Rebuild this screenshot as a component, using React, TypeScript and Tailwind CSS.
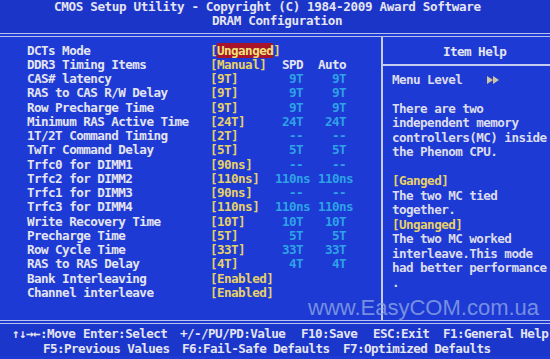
type Row = { label: string; value: string; spd?: string; auto?: string };

const rows: Row[] = [
  { label: "DCTs Mode", value: "Unganged" },
  { label: "DDR3 Timing Items", value: "Manual", spd: " SPD", auto: "Auto" },
  { label: "CAS# latency", value: "9T", spd: "  9T", auto: "  9T" },
  { label: "RAS to CAS R/W Delay", value: "9T", spd: "  9T", auto: "  9T" },
  { label: "Row Precharge Time", value: "9T", spd: "  9T", auto: "  9T" },
  { label: "Minimum RAS Active Time", value: "24T", spd: " 24T", auto: " 24T" },
  { label: "1T/2T Command Timing", value: "2T", spd: "  --", auto: "  --" },
  { label: "TwTr Command Delay", value: "5T", spd: "  5T", auto: "  5T" },
  { label: "Trfc0 for DIMM1", value: "90ns", spd: "  --", auto: "  --" },
  { label: "Trfc2 for DIMM2", value: "110ns", spd: "110ns", auto: "110ns" },
  { label: "Trfc1 for DIMM3", value: "90ns", spd: "  --", auto: "  --" },
  { label: "Trfc3 for DIMM4", value: "110ns", spd: "110ns", auto: "110ns" },
  { label: "Write Recovery Time", value: "10T", spd: " 10T", auto: " 10T" },
  { label: "Precharge Time", value: "5T", spd: "  5T", auto: "  5T" },
  { label: "Row Cycle Time", value: "33T", spd: " 33T", auto: " 33T" },
  { label: "RAS to RAS Delay", value: "4T", spd: "  4T", auto: "  4T" },
  { label: "Bank Interleaving", value: "Enabled" },
  { label: "Channel interleave", value: "Enabled" },
];

// help panel lines, y = yellow heading
const help: { t: string; y?: boolean }[] = [
  { t: "" },
  { t: "There are two" },
  { t: "independent memory" },
  { t: "controllers(MC) inside" },
  { t: "the Phenom CPU." },
  { t: "" },
  { t: "[Ganged]", y: true },
  { t: "The two MC tied" },
  { t: "together." },
  { t: "[Unganged]", y: true },
  { t: "The two MC worked" },
  { t: "interleave.This mode" },
  { t: "had better performance" },
  { t: "." },
];

export default function App() {
  return (
    <div
      className="relative w-[550px] h-[359px] overflow-hidden bg-[#1d3bd4] text-[#e4e4f2] font-bold text-[12.6px] tracking-[-0.56px] whitespace-pre"
      style={{ fontFamily: '"DejaVu Sans Mono", "Liberation Mono", monospace' }}
    >
      {/* title */}
      <div className="h-[33px] bg-[#1b35c8]">
        <div className="h-[14px] leading-[14px] pl-[54px] tracking-[-0.35px]">
          CMOS Setup Utility - Copyright (C) 1984-2009 Award Software
        </div>
        <div className="h-[14px] leading-[14px] pl-[212px] tracking-[-0.35px]">DRAM Configuration</div>
      </div>
      <div className="h-[4px] border-y border-[#b8c2ee]" />

      {/* main */}
      <div className="flex h-[283px]">
        <div className="w-[381px] pt-[6.6px]">
          {rows.map((r, i) => (
            <div key={i} className="flex h-[14.25px] leading-[14.25px]">
              <span className="w-[210px] pl-[27px]">{r.label}</span>
              <span className="w-[65px] text-[#e6d068]">
                [
                {i === 0 ? (
                  <span className="bg-[#a8142a] text-[#f2e27a]">{r.value}</span>
                ) : (
                  r.value
                )}
                ]
              </span>
              <span className={`w-[43px] ${i === 1 ? "text-[#e4e4f2]" : "text-[#2ea2e6]"}`}>
                {r.spd ?? ""}
              </span>
              <span className={i === 1 ? "text-[#e4e4f2]" : "text-[#2ea2e6]"}>{r.auto ?? ""}</span>
            </div>
          ))}
        </div>
        <div className="flex-1 border-l-2 border-[#c4cbee]">
          <div className="h-[29px] leading-[29px] pl-[60px] border-b-2 border-[#c4cbee]">Item Help</div>
          <div className="pt-[6.5px] pl-[9px] text-[#dcdcee]">
            <div className="flex h-[14.5px] items-center">
              <span className="w-[95px] leading-[14.5px]">Menu Level</span>
              <svg width="13" height="8" viewBox="0 0 13 8" className="fill-[#cfc6a0]">
                <path d="M0 0 L6 4 L0 8 Z M6 0 L12 4 L6 8 Z" />
              </svg>
            </div>
            {help.map((h, i) => (
              <div key={i} className={`h-[14.5px] leading-[14.5px] ${h.y ? "text-[#e6d068]" : ""}`}>
                {h.t}
              </div>
            ))}
          </div>
        </div>
      </div>

      <div className="h-[4px] border-y border-[#b8c2ee]" />

      {/* footer */}
      <div className="bg-[#1b36ca] pt-[2px]">
        <div className="flex h-[15px] leading-[15px] pl-[12px]">
          <span className="w-[71px]">↑↓→←:Move</span>
          <span className="w-[97px]">Enter:Select</span>
          <span className="w-[121px]">+/-/PU/PD:Value</span>
          <span className="w-[72px]">F10:Save</span>
          <span className="w-[70px]">ESC:Exit</span>
          <span>F1:General Help</span>
        </div>
        <div className="flex h-[15px] leading-[15px] pl-[43px]">
          <span className="w-[139px]">F5:Previous Values</span>
          <span className="w-[161px]">F6:Fail-Safe Defaults</span>
          <span>F7:Optimized Defaults</span>
        </div>
      </div>

      {/* watermark */}
      <div
        className="absolute left-[308px] top-[297px] text-[22px] leading-none font-normal tracking-normal text-[#8fa6e6]/80"
        style={{ fontFamily: '"Liberation Sans", Arial, sans-serif' }}
      >
        www.EasyCOM.com.ua
      </div>
    </div>
  );
}
